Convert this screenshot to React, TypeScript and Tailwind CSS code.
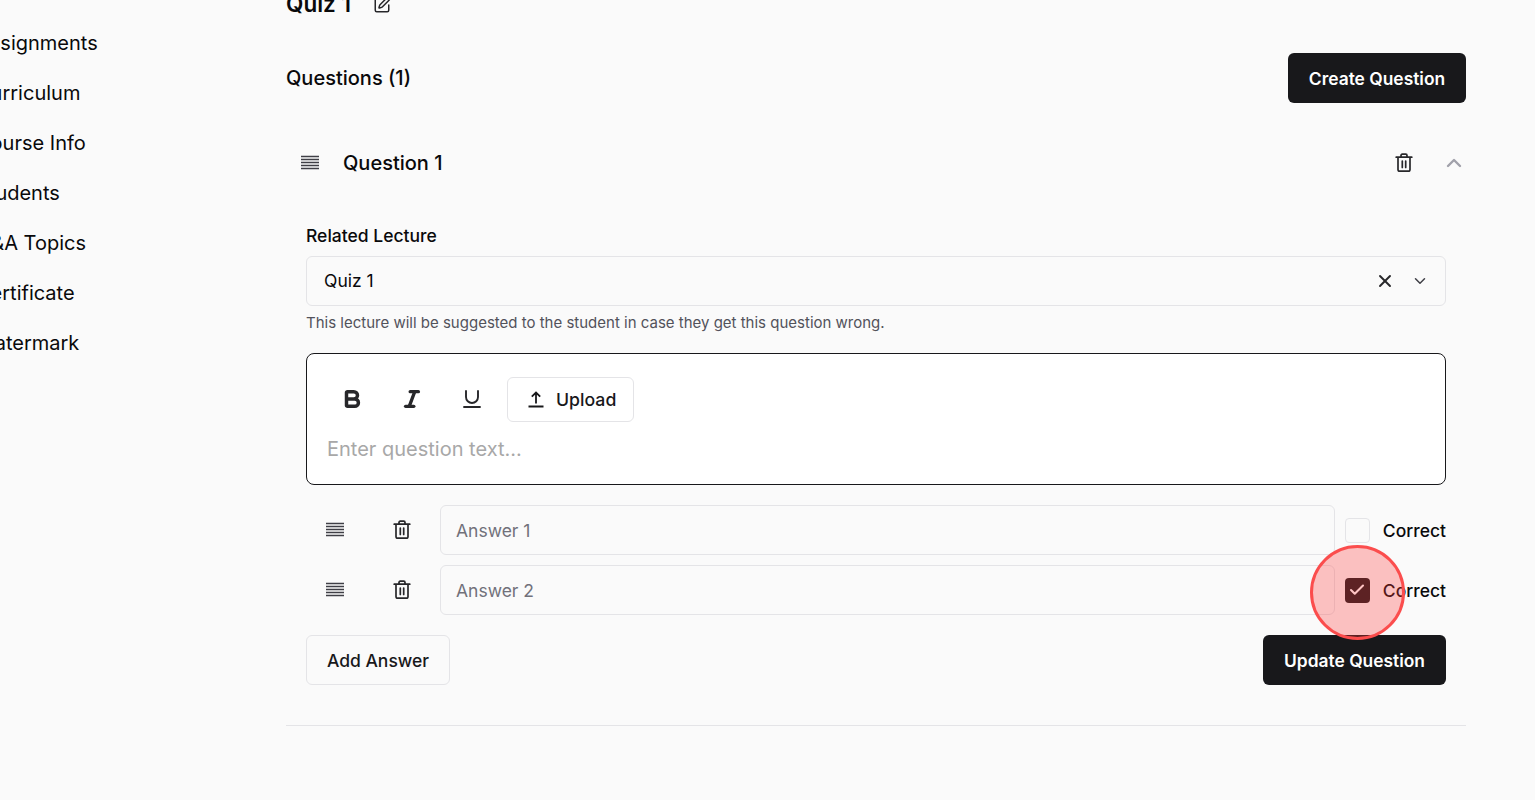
import React from 'react';
import { Bold, Italic, Underline, ChevronDown, ChevronUp, X, Check, SquarePen } from 'lucide-react';

const navItems = ['Announcements', 'Assignments', 'Curriculum', 'Course Info', 'Students', 'Q&A Topics', 'Certificate', 'Watermark'];

const DragIcon = () => (
  <svg width="18" height="18" viewBox="0 0 18 18" fill="none" stroke="#3f3f46" strokeWidth="1.300">
    <path d="M0 2.500h18M0 5.500h18M0 8.500h18M0 11.500h18M0 14.500h18" />
  </svg>
);

const TrashIcon = () => (
  <svg width="22" height="22" viewBox="0 0 22 22" fill="none" stroke="#27272a" strokeWidth="1.700" strokeLinecap="round" strokeLinejoin="round">
    <path d="M3.200 5.200h15.600M5 5.200v12.300c0 1 .7 1.700 1.700 1.700h8.600c1 0 1.700-.7 1.700-1.700V5.200M8 5V3.400c0-.7.500-1.200 1.200-1.200h3.600c.7 0 1.200.5 1.200 1.200V5M9.300 9v6.500M12.700 9v6.500" />
  </svg>
);

const UploadIcon = () => (
  <svg width="16" height="18" viewBox="0 0 16 18" fill="none" stroke="#18181b" strokeWidth="1.800">
    <path d="M8 12.500V1.500M3.800 5.700 8 1.500l4.200 4.200M.5 15.500h15" />
  </svg>
);

const AnswerRow = ({ placeholder, checked }: { placeholder: string; checked?: boolean }) => (
  <div className="flex items-center h-[50px]">
    <div className="w-[58px] pl-5 flex"><DragIcon /></div>
    <div className="w-[76px] pl-[27px] flex"><TrashIcon /></div>
    <div className="flex-1 h-full flex items-center px-[15px] pt-[2px] border border-[#e4e4e7] rounded-md text-[17.500px] text-[#71717a]">{placeholder}</div>
    <div className="relative ml-2.5 mr-[13px]">
      {checked ? (
        <div className="w-[25px] h-[25px] rounded bg-[#18181b] flex items-center justify-center">
          <Check size={18} color="#ffffff" strokeWidth={2.800} />
        </div>
      ) : (
        <div className="w-[25px] h-[25px] rounded border border-[#e4e4e7]" />
      )}
      {checked && (
        <div className="absolute left-[-35px] top-[-33px] w-[95px] h-[95px] rounded-full border-[3px] border-[#fb4d4d] bg-[#ff3b3b]/30" />
      )}
    </div>
    <span className="pt-[2px] text-[17.500px] font-medium text-[#09090b]">Correct</span>
  </div>
);

export default function App() {
  return (
    <div className="h-screen w-full overflow-hidden flex bg-[#fafafa] text-[#09090b] font-['Inter',sans-serif]">
      {/* Sidebar, scrolled off to the left */}
      <aside className="w-[286px] shrink-0 overflow-hidden">
        <nav className="ml-[-24px] mt-[-32px] flex flex-col">
          {navItems.map(item => (
            <div key={item} className="h-[50px] flex items-center text-[20px]">{item}</div>
          ))}
        </nav>
      </aside>

      <main className="w-[1180px] shrink-0">
        <div className="mt-[-14px] h-[36px] flex items-center gap-[22px]">
          <h1 className="text-[22.500px] font-semibold">Quiz 1</h1>
          <SquarePen size={18} color="#27272a" strokeWidth={2} className="mt-[2px]" />
        </div>

        <div className="mt-[31px] h-[50px] flex items-center justify-between">
          <h2 className="text-[20px] font-medium">Questions (1)</h2>
          <button className="w-[178px] h-[50px] pt-[3px] rounded-md bg-[#18181b] text-white text-[17.400px] font-semibold">Create Question</button>
        </div>

        <div className="mt-[35px] h-[50px] flex items-center pl-[15px]">
          <DragIcon />
          <span className="ml-[24px] text-[20px] font-medium flex-1">Question 1</span>
          <TrashIcon />
          <ChevronUp size={24} color="#a1a1aa" strokeWidth={2.400} className="ml-[27px]" />
        </div>

        <section className="px-5 mt-[35px]">
          <label className="block text-[17.500px] font-medium leading-[25px]">Related Lecture</label>
          <div className="mt-[8px] h-[50px] flex items-center border border-[#e4e4e7] rounded-md pl-[17px] pr-[16px]">
            <span className="flex-1 pt-[1px] text-[17.500px]">Quiz 1</span>
            <X size={20} color="#27272a" strokeWidth={2.300} className="mr-[1px]" />
            <ChevronDown size={18} color="#3f3f46" className="ml-[15px]" />
          </div>
          <p className="mt-[7px] text-[15px] leading-[20px] text-[#52525b]">This lecture will be suggested to the student in case they get this question wrong.</p>

          <div className="mt-[20px] h-[132px] border border-[#18181b] rounded-lg bg-white px-5 pt-[23px]">
            <div className="flex items-center gap-2.5 h-[45px] text-[#27272a]">
              <div className="w-[50px] flex justify-center pb-[2px]"><Bold size={22} strokeWidth={3.800} /></div>
              <div className="w-[50px] flex justify-center pb-[2px]"><Italic size={22} strokeWidth={3.600} /></div>
              <div className="w-[50px] flex justify-center pb-[2px]"><Underline size={24} strokeWidth={1.900} /></div>
              <button className="w-[127px] h-[45px] pl-5 flex items-center gap-3 border border-[#e4e4e7] rounded-md text-[17.700px] font-medium text-[#18181b]">
                <UploadIcon />
                <span className="pt-[1px]">Upload</span>
              </button>
            </div>
            <div className="mt-[13px] text-[20px] text-[#a8a8a8] leading-[28px]">Enter question text...</div>
          </div>

          <div className="mt-[20px] flex flex-col gap-2.5">
            <AnswerRow placeholder="Answer 1" />
            <AnswerRow placeholder="Answer 2" checked />
          </div>

          <div className="mt-5 flex items-center justify-between">
            <button className="w-[144px] h-[50px] pt-[3px] border border-[#e4e4e7] rounded-md text-[17.500px] font-medium text-[#18181b]">Add Answer</button>
            <button className="w-[183px] h-[50px] pt-[3px] rounded-md bg-[#18181b] text-white text-[17.400px] font-semibold">Update Question</button>
          </div>
        </section>

        <div className="mt-10 border-t border-[#e4e4e7]" />
      </main>
    </div>
  );
}
